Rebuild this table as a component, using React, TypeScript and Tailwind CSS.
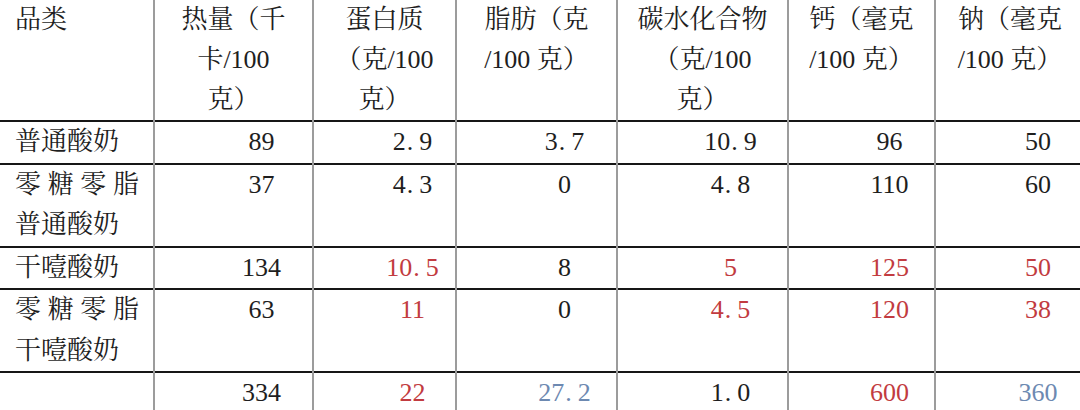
type Tone = "k" | "r" | "b";

type Cell = { v: string; t?: Tone };

const header: string[][] = [
  ["热量（千", "卡/100", "克）"],
  ["蛋白质", "（克/100", "克）"],
  ["脂肪（克", "/100 克）"],
  ["碳水化合物", "（克/100", "克）"],
  ["钙（毫克", "/100 克）"],
  ["钠（毫克", "/100 克）"],
];

const rows: { name: string; cells: Cell[] }[] = [
  {
    name: "普通酸奶",
    cells: [{ v: "89" }, { v: "2.9" }, { v: "3.7" }, { v: "10.9" }, { v: "96" }, { v: "50" }],
  },
  {
    name: "零糖零脂普通酸奶",
    cells: [{ v: "37" }, { v: "4.3" }, { v: "0" }, { v: "4.8" }, { v: "110" }, { v: "60" }],
  },
  {
    name: "干噎酸奶",
    cells: [
      { v: "134" },
      { v: "10.5", t: "r" },
      { v: "8" },
      { v: "5", t: "r" },
      { v: "125", t: "r" },
      { v: "50", t: "r" },
    ],
  },
  {
    name: "零糖零脂干噎酸奶",
    cells: [
      { v: "63" },
      { v: "11", t: "r" },
      { v: "0" },
      { v: "4.5", t: "r" },
      { v: "120", t: "r" },
      { v: "38", t: "r" },
    ],
  },
  {
    name: "",
    cells: [
      { v: "334" },
      { v: "22", t: "r" },
      { v: "27.2", t: "b" },
      { v: "1.0" },
      { v: "600", t: "r" },
      { v: "360", t: "b" },
    ],
  },
];

const widths = ["w-[154px]", "w-[159px]", "w-[143px]", "w-[161px]", "w-[171px]", "w-[147px]", "w-[149px]"];

const toneClass: Record<Tone, string> = {
  k: "text-[#1e1e1e]",
  r: "text-[#c23b40]",
  b: "text-[#6d89b1]",
};

// the source renders the decimal point wide, so give it some room
function Num({ v }: { v: string }) {
  const i = v.indexOf(".");
  if (i < 0) return <>{v}</>;
  return (
    <>
      {v.slice(0, i)}
      <span className="mr-[6px] ml-[1px]">.</span>
      {v.slice(i + 1)}
    </>
  );
}

export default function App() {
  return (
    <div className="w-[1080px] h-[410px] overflow-hidden bg-white text-[#1e1e1e] font-['Liberation_Serif','Times_New_Roman','Noto_Serif_CJK_SC','Noto_Sans_CJK_SC',serif]">
      <table className="table-fixed border-collapse w-[1084px] text-[26px]">
        <colgroup>
          {widths.map((w, i) => (
            <col key={i} className={w} />
          ))}
        </colgroup>
        <thead>
          <tr className="border-b-2 border-b-[#161616]">
            <th className="h-[120px] align-top text-left font-normal leading-[40px] pl-[15px] border-r-2 border-r-[#9c9c9c]">
              品类
            </th>
            {header.map((lines, i) => (
              <th
                key={i}
                className="h-[120px] align-top text-center font-normal leading-[40px] px-1 border-r-2 border-r-[#9c9c9c] last:border-r-0 whitespace-nowrap"
              >
                {lines.map((l, j) => (
                  <div key={j}>{l}</div>
                ))}
              </th>
            ))}
          </tr>
        </thead>
        <tbody>
          {rows.map((row, ri) => (
            <tr key={ri} className="border-b-2 border-b-[#161616] last:border-b-0">
              <td className="align-top leading-[40.5px] pl-[15px] pr-[14px] text-justify border-r-2 border-r-[#9c9c9c]">
                {row.name}
              </td>
              {row.cells.map((c, ci) => (
                <td
                  key={ci}
                  className={`align-top leading-[40.5px] pl-[56px] text-center border-r-2 border-r-[#9c9c9c] last:border-r-0 ${toneClass[c.t ?? "k"]}`}
                >
                  <Num v={c.v} />
                </td>
              ))}
            </tr>
          ))}
        </tbody>
      </table>
    </div>
  );
}
